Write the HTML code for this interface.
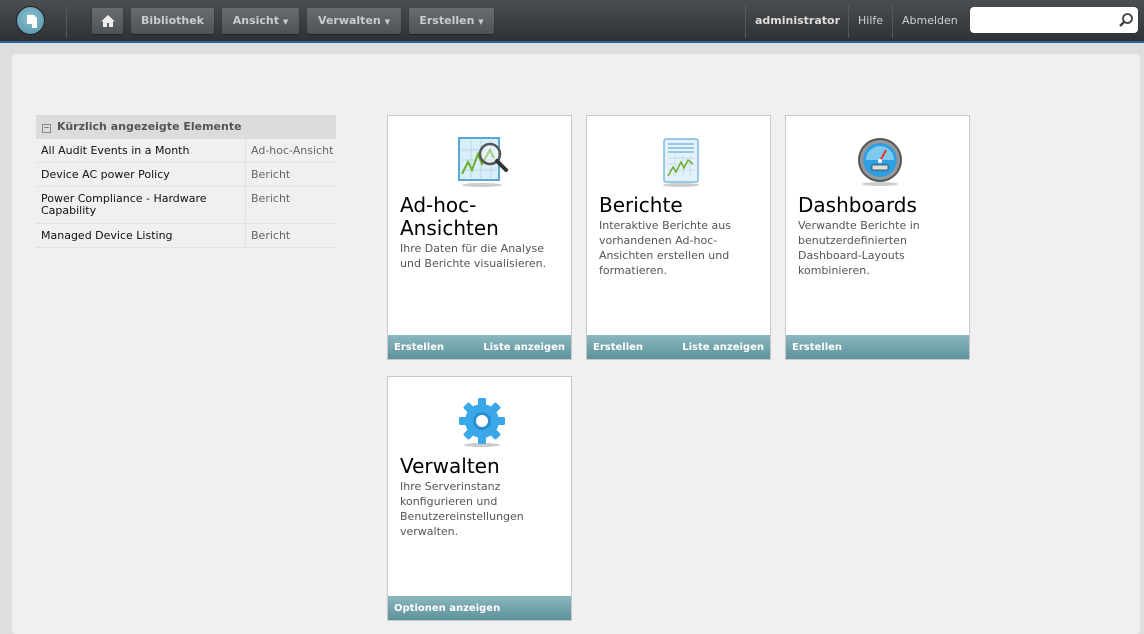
<!DOCTYPE html>
<html><head><meta charset="utf-8"><style>
*{margin:0;padding:0;box-sizing:border-box}
body{width:1144px;height:626px;overflow:hidden;background:#dedede;font-family:"DejaVu Sans","Liberation Sans",sans-serif;position:relative}
.hdr{position:absolute;left:0;top:0;width:1144px;height:43px;background:linear-gradient(#4b4e51,#2f3234);border-bottom:2px solid #2a6496}
.logo{position:absolute;left:16px;top:6px;width:29px;height:29px;border-radius:50%;background:radial-gradient(circle at 50% 40%,#8fc3d3,#4d8ea3);border:1px solid #222}
.sep{position:absolute;top:5px;width:1px;height:33px;background:#24272a;border-right:1px solid #55585b}
.btn{position:absolute;top:8px;height:26px;background:linear-gradient(#6a6d70,#505356);border-radius:2px;color:#c9cbcc;font-weight:bold;font-size:11px;line-height:26px;text-align:center;box-shadow:0 1px 1px #222}
.btn .c{font-size:7px}
.tx{position:absolute;top:0;height:42px;line-height:42px;font-size:11px;color:#cfd1d2}
.search{position:absolute;left:970px;top:7px;width:168px;height:26px;background:#fff;border-radius:4px}
.panel{position:absolute;left:12px;top:54px;width:1128px;height:580px;background:#f0f0f0;border-radius:4px}
.rec{position:absolute;left:36px;top:115px;width:300px;font-size:11px;color:#111}
.rec .h{height:24px;background:#dcdcdc;font-weight:bold;color:#555;line-height:24px;padding-left:6px;font-size:11px}
.rec .h span{display:inline-block;width:9px;height:9px;border:1px solid #888;margin-right:6px;font-size:8px;line-height:6px;text-align:center;font-weight:normal}
.row{display:flex;border-bottom:1px solid #e2e2e2}
.row .a{width:210px;padding:6px 5px 0;line-height:12px;border-right:1px solid #e2e2e2}
.row .b{flex:1;padding:6px 5px 0;color:#666;line-height:12px;white-space:nowrap;overflow:hidden}
.card{position:absolute;width:185px;height:245px;background:#fff;border:1px solid #c8c8c8}
.card .t{position:absolute;left:12px;top:78px;font-size:20px;line-height:23px;color:#000}
.card .d{font-size:11px;line-height:15px;color:#555;margin-top:1px}
.card .f{position:absolute;left:0;bottom:0;width:183px;height:24px;background:linear-gradient(#8bb7bf,#5e929b);color:#fff;font-weight:bold;font-size:10px;line-height:25px;padding:0 6px;display:flex;justify-content:space-between}
.ic{position:absolute;left:68px;top:16px}
</style></head><body>
<div class="hdr">
<div class="logo"><svg width="29" height="29" viewBox="0 0 29 29"><path d="M10 8h7l3 3v10h-5v-4h-5z" fill="#fff"/></svg></div>
<div class="sep" style="left:66px"></div>
<div class="btn" style="left:92px;width:31px"><svg width="16" height="14" viewBox="0 0 16 14" style="margin-top:6px"><path d="M8 1L1 7.5h2V13h4V9h2v4h4V7.5h2z" fill="#eee"/></svg></div>
<div class="btn" style="left:131px;width:83px">Bibliothek</div>
<div class="btn" style="left:222px;width:77px">Ansicht <span class="c">▼</span></div>
<div class="btn" style="left:307px;width:94px">Verwalten <span class="c">▼</span></div>
<div class="btn" style="left:409px;width:85px">Erstellen <span class="c">▼</span></div>
<div class="sep" style="left:745px"></div>
<div class="tx" style="left:755px;font-weight:bold;color:#ddd">administrator</div>
<div class="sep" style="left:848px"></div>
<div class="tx" style="left:858px">Hilfe</div>
<div class="sep" style="left:892px"></div>
<div class="tx" style="left:902px">Abmelden</div>
<div class="search"><svg width="16" height="16" viewBox="0 0 16 16" style="position:absolute;right:4px;top:5px"><circle cx="9.5" cy="6.5" r="4.5" fill="none" stroke="#444" stroke-width="1.8"/><path d="M6 10l-4 4" stroke="#444" stroke-width="2.5"/></svg></div>
</div>
<div class="panel"></div>
<div class="rec">
<div class="h"><span>−</span>Kürzlich angezeigte Elemente</div>
<div class="row" style="height:24px"><div class="a">All Audit Events in a Month</div><div class="b">Ad-hoc-Ansicht</div></div>
<div class="row" style="height:24px"><div class="a">Device AC power Policy</div><div class="b">Bericht</div></div>
<div class="row" style="height:37px"><div class="a">Power Compliance - Hardware Capability</div><div class="b">Bericht</div></div>
<div class="row" style="height:24px"><div class="a">Managed Device Listing</div><div class="b">Bericht</div></div>
</div>

<div class="card" style="left:387px;top:115px">
<svg class="ic" width="56" height="56" viewBox="0 0 56 56"><ellipse cx="26" cy="53" rx="20" ry="2" fill="#ccc"/><rect x="3" y="6" width="40" height="42" fill="#d8eef8" stroke="#5aa7d6" stroke-width="2"/><path d="M5 18h36M5 28h36M5 38h36M15 8v38M25 8v38M35 8v38" stroke="#b7d6e6"/><path d="M6 42l6-12 4 8 6-16 4 10 8-14 4 8" fill="none" stroke="#6fae2e" stroke-width="2"/><circle cx="34" cy="22" r="10" fill="rgba(255,255,255,.4)" stroke="#555" stroke-width="2.5"/><path d="M41 29l9 9" stroke="#333" stroke-width="4" stroke-linecap="round"/></svg>
<div class="t">Ad-hoc-<br>Ansichten<div class="d">Ihre Daten für die Analyse<br>und Berichte visualisieren.</div></div>
<div class="f"><span>Erstellen</span><span>Liste anzeigen</span></div></div>

<div class="card" style="left:586px;top:115px">
<svg class="ic" width="56" height="56" viewBox="0 0 56 56"><ellipse cx="26" cy="53" rx="18" ry="2" fill="#ccc"/><rect x="9" y="7" width="34" height="43" rx="2" fill="#e3f1fa" stroke="#7eb9dd" stroke-width="1.5"/><path d="M13 12h26M13 16h26M13 20h26" stroke="#7eb9dd" stroke-width="1.5"/><path d="M13 26h26M13 32h26M13 38h26M20 24v20M28 24v20M35 24v20" stroke="#c3dcea"/><path d="M13 44l5-9 3 5 5-10 3 6 4-8 5 4" fill="none" stroke="#6fae2e" stroke-width="1.5"/></svg>
<div class="t">Berichte<div class="d">Interaktive Berichte aus<br>vorhandenen Ad-hoc-<br>Ansichten erstellen und<br>formatieren.</div></div>
<div class="f"><span>Erstellen</span><span>Liste anzeigen</span></div></div>

<div class="card" style="left:785px;top:115px">
<svg class="ic" width="56" height="56" viewBox="0 0 56 56"><ellipse cx="26" cy="52" rx="18" ry="2" fill="#ccc"/><circle cx="26" cy="28" r="22" fill="#555"/><circle cx="26" cy="28" r="20" fill="#999"/><circle cx="26" cy="28" r="17" fill="#2e9fe0"/><path d="M12 28a14 14 0 0 1 28 0" fill="#7ccaf0"/><rect x="18" y="33" width="16" height="5" fill="#ddd" stroke="#333" stroke-width=".7"/><path d="M26 29l6-11" stroke="#e33" stroke-width="2"/><circle cx="26" cy="29" r="2" fill="#fff"/></svg>
<div class="t">Dashboards<div class="d">Verwandte Berichte in<br>benutzerdefinierten<br>Dashboard-Layouts<br>kombinieren.</div></div>
<div class="f"><span>Erstellen</span></div></div>

<div class="card" style="left:387px;top:376px">
<svg class="ic" width="56" height="56" viewBox="0 0 56 56"><ellipse cx="26" cy="52" rx="18" ry="2" fill="#ccc"/><g transform="translate(26 28)" fill="#3aa7e8"><circle r="17"/><g id="t"><rect x="-4" y="-23" width="8" height="10" rx="1.5"/></g><use href="#t" transform="rotate(45)"/><use href="#t" transform="rotate(90)"/><use href="#t" transform="rotate(135)"/><use href="#t" transform="rotate(180)"/><use href="#t" transform="rotate(225)"/><use href="#t" transform="rotate(270)"/><use href="#t" transform="rotate(315)"/><circle r="9" fill="#2a8fd0"/><circle r="6" fill="#fff"/></g></svg>
<div class="t">Verwalten<div class="d">Ihre Serverinstanz<br>konfigurieren und<br>Benutzereinstellungen<br>verwalten.</div></div>
<div class="f"><span>Optionen anzeigen</span></div></div>
</body></html>
